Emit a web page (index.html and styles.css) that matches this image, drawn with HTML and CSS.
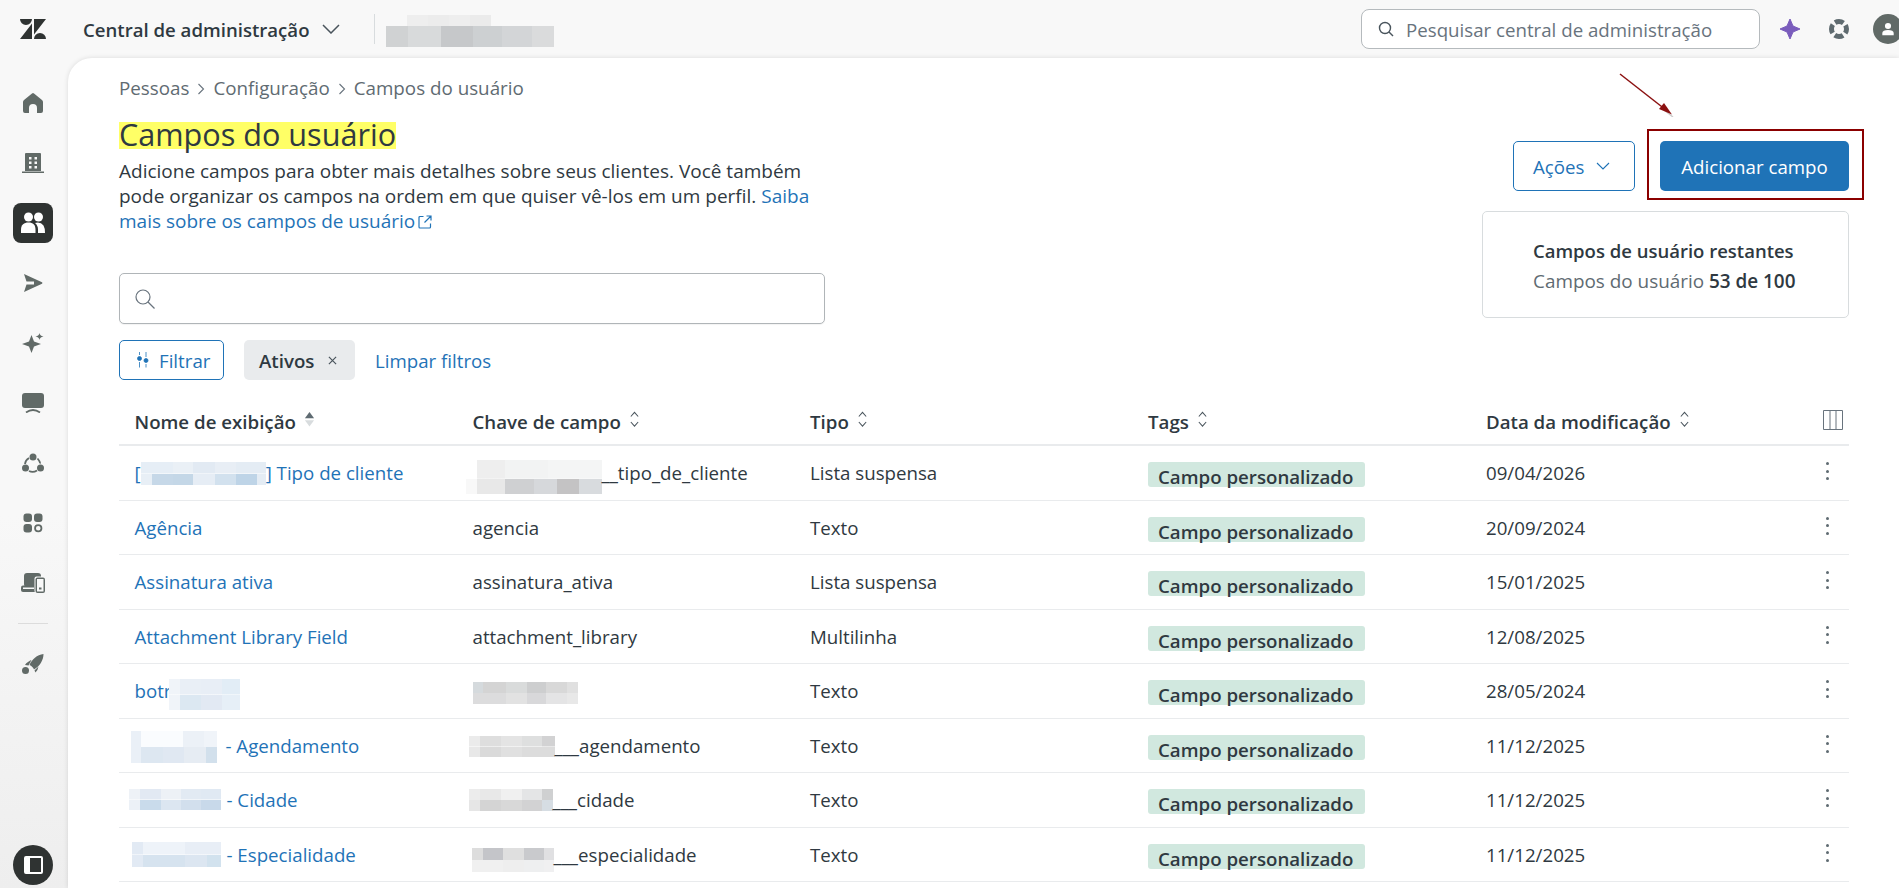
FILE: index.html
```html
<!DOCTYPE html>
<html lang="pt-BR">
<head>
    <meta charset="UTF-8">
    <meta name="viewport" content="width=device-width, initial-scale=1.0">
    <title>Campos do usuário</title>
    <link rel="stylesheet" href="styles.css">
</head>
<body>

    <header class="topbar">
        <svg class="logo" viewBox="0 0 26 20"><path d="M12 4.5V20H0ZM14 0H26L14 15.5ZM0 0H12A6 6 0 0 1 0 0ZM14 20A6 6 0 0 1 26 20Z"/></svg>
        <span class="product">Central de administração</span>
        <svg class="product-chevron" viewBox="0 0 18 10"><path d="M1 1l8 8 8-8"/></svg>
        <span class="topbar-sep"></span>
        <span class="blur blur-account"></span>
        <div class="global-search">
            <svg class="search-icon-small" viewBox="0 0 16 16"><circle cx="7" cy="7" r="5.5"/><path d="M11 11l4 4"/></svg>
            <span>Pesquisar central de administração</span>
        </div>
        <svg class="top-icon ai-star" viewBox="0 0 22 22"><path d="M11 1 14 8 21 11 14 14 11 21 8 14 1 11 8 8Z"/></svg>
        <svg class="top-icon support" viewBox="0 0 20 20"><circle cx="10" cy="10" r="7.500"/></svg>
        <div class="avatar">
            <svg viewBox="0 0 16 16"><circle cx="8" cy="4.500" r="3.500"/><path d="M1.500 15V12.500C1.500 10 4 9 8 9S14.500 10 14.500 12.500V15Z"/></svg>
        </div>
    </header>

    <div class="shell">
        <nav class="sidebar">
            <a class="nav-item"><svg viewBox="0 0 20 20"><path d="M9 .5a1.600 1.600 0 0 1 2 0l8 6.500q1 .8 1 2V18a2 2 0 0 1-2 2h-4v-5a4 4 0 0 0-8 0v5H2a2 2 0 0 1-2-2V9q0-1.200 1-2Z"/></svg></a>
            <a class="nav-item"><svg viewBox="0 0 22 20"><path fill-rule="evenodd" d="M4 0H18a1 1 0 0 1 1 1V18H3V1a1 1 0 0 1 1-1ZM7 4V6.500H9.500V4ZM12.500 4V6.500H15V4ZM7 8.500V11H9.500V8.500ZM12.500 8.500V11H15V8.500ZM7 13V15.500H9.500V13ZM12.500 13V15.500H15V13Z"/><path d="M0 18.500H22V20H0Z"/></svg></a>
            <a class="nav-item active"><svg viewBox="0 0 24 22"><circle cx="7.500" cy="5" r="4.500"/><circle cx="17.500" cy="5" r="4.500"/><path d="M0 21V17.500C0 13 3 10.500 7.500 10.500S14.500 13 14.500 17.500V21Z"/><path d="M14 11Q19.500 9.500 22.500 13.500Q24 16 24 21H17V17.500Q17 13.500 14 11Z"/></svg></a>
            <a class="nav-item"><svg viewBox="0 0 20 20"><path d="M1 1 19 9.200Q20 10 19 10.800L1 19 3.500 11.500H11V8.500H3.500Z"/></svg></a>
            <a class="nav-item"><svg viewBox="0 0 22 20"><path d="M9.500 2 12 8.500 19 11 12 13.500 9.500 20 7 13.500 0 11 7 8.500Z"/><path d="M17.500 0C17.800 2 18.800 3 21.500 3.500C18.800 4 17.800 5 17.500 7C17.200 5 16.200 4 13.500 3.500C16.200 3 17.200 2 17.500 0Z"/></svg></a>
            <a class="nav-item"><svg viewBox="0 0 22 20"><rect x="0" y="0" width="22" height="15" rx="3"/><path d="M4 19.500Q11 14.500 18 19.500" class="nav-stroke"/></svg></a>
            <a class="nav-item"><svg viewBox="0 0 22 20"><circle cx="11" cy="4" r="3.500"/><circle cx="3.500" cy="15" r="3.500"/><circle cx="18.500" cy="15" r="3.500"/><path class="nav-stroke" d="M7 5Q3.500 7 3 11M18 10.500Q18.500 9 15.500 5.500M7 18Q11 20 15 17.500"/></svg></a>
            <a class="nav-item"><svg viewBox="0 0 20 20"><rect x="0.500" y="0.500" width="8.500" height="8.500" rx="3"/><rect x="11" y="0.500" width="8.500" height="8.500" rx="3"/><rect x="0.500" y="11" width="8.500" height="8.500" rx="3"/><circle class="nav-stroke" cx="15.250" cy="15.250" r="3.200"/></svg></a>
            <a class="nav-item"><svg class="nav-devices" viewBox="0 0 24 20"><rect x="3" y="0" width="17" height="14" rx="3"/><rect x="0" y="12.500" width="16" height="6.500" rx="2"/><rect class="nav-gap" x="2" y="14.500" width="11" height="1.500"/><rect class="nav-gap" x="13.500" y="3.500" width="10.500" height="16.500" rx="2"/><rect x="14.500" y="4.500" width="9.500" height="15.500" rx="2"/><rect class="nav-gap" x="16" y="6" width="6.500" height="12.500"/><rect x="18" y="14.500" width="2.500" height="2"/></svg></a>
            <span class="nav-sep"></span>
            <a class="nav-item"><svg viewBox="0 0 22 20"><path d="M21.500 0C21.500 6 18 12 12 15.500C11.500 14 9.500 11.500 7.500 11C10 5 15 1 21.500 0Z"/><path d="M6 8Q9 5.800 9.500 6L6.500 11.500 3 11Q4 9 6 8ZM12.500 16.500 16.500 12.500Q16 16 13.500 18.500Z"/><circle cx="3.500" cy="16.500" r="3.500"/></svg></a>
            <button class="collapse-btn"><span class="collapse-icon"></span></button>
        </nav>

        <main class="panel">
            <div class="page-head">
                <div class="page-intro">
                    <div class="breadcrumb">
                        <span>Pessoas</span>
                        <svg viewBox="0 0 8 12"><path d="M1.500 1l5 5-5 5"/></svg>
                        <span>Configuração</span>
                        <svg viewBox="0 0 8 12"><path d="M1.500 1l5 5-5 5"/></svg>
                        <span>Campos do usuário</span>
                    </div>
                    <h1><span class="marked">Campos do usuário</span></h1>
                    <p class="lead">Adicione campos para obter mais detalhes sobre seus clientes. Você também pode organizar os campos na ordem em que quiser vê-los em um perfil. <a href="#">Saiba mais sobre os campos de usuário<svg class="ext-icon" viewBox="0 0 14 14"><path d="M5.500 1.500H2a1 1 0 0 0-1 1V12a1 1 0 0 0 1 1h9.500a1 1 0 0 0 1-1V8.500M8.500 1H13V5.500M13 1 6.500 7.500"/></svg></a></p>
                    <div class="search-box">
                        <svg viewBox="0 0 20 20"><circle cx="8" cy="8" r="7"/><path d="M13 13l6.500 6.500"/></svg>
                    </div>
                </div>
                <div class="page-side">
                    <div class="page-actions">
                        <button class="btn-outline">Ações <svg viewBox="0 0 14 8"><path d="M1 1l6 6 6-6"/></svg></button>
                        <div class="annotated">
                            <button class="btn-primary">Adicionar campo</button>
                            <svg class="note-arrow" viewBox="0 0 56 44"><path class="note-shadow" d="M44 36l10 8"/><path class="note-line" d="M1 1 47 37"/><path class="note-head" d="M53 41.500 40 36 45 30Z"/></svg>
                        </div>
                    </div>
                    <div class="quota-card">
                        <div class="quota-title">Campos de usuário restantes</div>
                        <div class="quota-text">Campos do usuário <b>53 de 100</b></div>
                    </div>
                </div>
            </div>

            <div class="filter-row">
                <button class="btn-filter">
                    <svg viewBox="0 0 12 16"><path d="M2.500 0V3M2.500 10V15.500M9 0V5M9 12V15.500"/><circle cx="2.500" cy="6.500" r="2"/><circle cx="9" cy="8.500" r="2"/></svg>
                    Filtrar
                </button>
                <span class="chip">Ativos <svg viewBox="0 0 10 10"><path d="M1 1l8 8M9 1l-8 8"/></svg></span>
                <a class="clear-link" href="#">Limpar filtros</a>
            </div>

            <div class="grid">
                <div class="row row-head">
                    <div class="cell">Nome de exibição <svg class="sort" viewBox="0 0 12 18"><path d="M6 1l5 7H1Z"/><path class="sort-off" d="M6 17l5-7H1Z"/></svg></div>
                    <div class="cell">Chave de campo <svg class="sort" viewBox="0 0 12 18"><path class="sort-line" d="M2 6l4-4.500L10 6M2 12l4 4.500L10 12"/></svg></div>
                    <div class="cell">Tipo <svg class="sort" viewBox="0 0 12 18"><path class="sort-line" d="M2 6l4-4.500L10 6M2 12l4 4.500L10 12"/></svg></div>
                    <div class="cell">Tags <svg class="sort" viewBox="0 0 12 18"><path class="sort-line" d="M2 6l4-4.500L10 6M2 12l4 4.500L10 12"/></svg></div>
                    <div class="cell">Data da modificação <svg class="sort" viewBox="0 0 12 18"><path class="sort-line" d="M2 6l4-4.500L10 6M2 12l4 4.500L10 12"/></svg></div>
                    <div class="cell cell-action"><svg class="columns-icon" viewBox="0 0 20 20"><path d="M.5.5H19.500V19.500H.5ZM7 .5V19.500M13 .5V19.500"/></svg></div>
                </div>

                <div class="row">
                    <div class="cell"><a href="#">[</a><span class="blur blur-n1"></span><a href="#">] Tipo de cliente</a></div>
                    <div class="cell"><span class="blur blur-k1"></span>__tipo_de_cliente</div>
                    <div class="cell">Lista suspensa</div>
                    <div class="cell"><span class="tag">Campo personalizado</span></div>
                    <div class="cell">09/04/2026</div>
                    <div class="cell cell-action"><span class="kebab"><i></i><i></i><i></i></span></div>
                </div>
                <div class="row">
                    <div class="cell"><a href="#">Agência</a></div>
                    <div class="cell">agencia</div>
                    <div class="cell">Texto</div>
                    <div class="cell"><span class="tag">Campo personalizado</span></div>
                    <div class="cell">20/09/2024</div>
                    <div class="cell cell-action"><span class="kebab"><i></i><i></i><i></i></span></div>
                </div>
                <div class="row">
                    <div class="cell"><a href="#">Assinatura ativa</a></div>
                    <div class="cell">assinatura_ativa</div>
                    <div class="cell">Lista suspensa</div>
                    <div class="cell"><span class="tag">Campo personalizado</span></div>
                    <div class="cell">15/01/2025</div>
                    <div class="cell cell-action"><span class="kebab"><i></i><i></i><i></i></span></div>
                </div>
                <div class="row">
                    <div class="cell"><a href="#">Attachment Library Field</a></div>
                    <div class="cell">attachment_library</div>
                    <div class="cell">Multilinha</div>
                    <div class="cell"><span class="tag">Campo personalizado</span></div>
                    <div class="cell">12/08/2025</div>
                    <div class="cell cell-action"><span class="kebab"><i></i><i></i><i></i></span></div>
                </div>
                <div class="row">
                    <div class="cell"><a href="#">botr</a><span class="blur blur-n5"></span></div>
                    <div class="cell"><span class="blur blur-k5"></span></div>
                    <div class="cell">Texto</div>
                    <div class="cell"><span class="tag">Campo personalizado</span></div>
                    <div class="cell">28/05/2024</div>
                    <div class="cell cell-action"><span class="kebab"><i></i><i></i><i></i></span></div>
                </div>
                <div class="row">
                    <div class="cell"><span class="blur blur-n6"></span><a class="after-blur" href="#">- Agendamento</a></div>
                    <div class="cell"><span class="blur blur-k6"></span>___agendamento</div>
                    <div class="cell">Texto</div>
                    <div class="cell"><span class="tag">Campo personalizado</span></div>
                    <div class="cell">11/12/2025</div>
                    <div class="cell cell-action"><span class="kebab"><i></i><i></i><i></i></span></div>
                </div>
                <div class="row">
                    <div class="cell"><span class="blur blur-n7"></span><a class="after-blur" href="#">- Cidade</a></div>
                    <div class="cell"><span class="blur blur-k7"></span>___cidade</div>
                    <div class="cell">Texto</div>
                    <div class="cell"><span class="tag">Campo personalizado</span></div>
                    <div class="cell">11/12/2025</div>
                    <div class="cell cell-action"><span class="kebab"><i></i><i></i><i></i></span></div>
                </div>
                <div class="row">
                    <div class="cell"><span class="blur blur-n8"></span><a class="after-blur" href="#">- Especialidade</a></div>
                    <div class="cell"><span class="blur blur-k8"></span>___especialidade</div>
                    <div class="cell">Texto</div>
                    <div class="cell"><span class="tag">Campo personalizado</span></div>
                    <div class="cell">11/12/2025</div>
                    <div class="cell cell-action"><span class="kebab"><i></i><i></i><i></i></span></div>
                </div>
            </div>
        </main>
    </div>

</body>
</html>
```

FILE: styles.css
```css
* {
    box-sizing: border-box;
}

body {
    font-family: "Open Sans", "Noto Sans", sans-serif;
    font-size: 18.7px;
    line-height: 25px;
    color: #2f3941;
    background: #f8f8f8;
    margin: 0;
    height: 100vh;
    overflow: hidden;
    display: flex;
    flex-direction: column;
}

a {
    color: #1f73b7;
    text-decoration: none;
}

button {
    font: inherit;
    cursor: pointer;
}

/* top bar */
.topbar {
    height: 58px;
    flex: none;
    display: flex;
    align-items: center;
    padding-left: 20px;
}

.logo {
    width: 26px;
    height: 20px;
    fill: #2f3332;
}

.product {
    margin-left: 37px;
    font-size: 18.6px;
    font-weight: 600;
}

.product-chevron {
    width: 18px;
    height: 10px;
    margin-left: 13px;
    fill: none;
    stroke: #49545c;
    stroke-width: 1.5;
}

.topbar-sep {
    width: 1px;
    height: 30px;
    background: #d8dcde;
    margin-left: 34px;
}

.global-search {
    width: 399px;
    height: 40px;
    margin-left: auto;
    display: flex;
    align-items: center;
    background: #fff;
    border: 1px solid #b5babd;
    border-radius: 8px;
    padding-left: 16px;
    color: #68737d;
}

.search-icon-small {
    width: 16px;
    height: 16px;
    margin-right: 12px;
    fill: none;
    stroke: #49545c;
    stroke-width: 1.4;
}

.top-icon {
    flex: none;
}

.ai-star {
    width: 22px;
    height: 22px;
    margin-left: 19px;
    fill: #7a5cbc;
    stroke: #7a5cbc;
    stroke-width: 1;
    stroke-linejoin: round;
}

.support {
    width: 20px;
    height: 20px;
    margin-left: 28px;
    fill: none;
    stroke: #5f6b70;
    stroke-width: 5;
    stroke-dasharray: 8.8 3;
    stroke-dashoffset: 4.4;
}

.avatar {
    width: 30px;
    height: 30px;
    flex: none;
    margin-left: 24px;
    margin-right: -4px;
    border-radius: 50%;
    background: #616a67;
    display: flex;
    align-items: center;
    justify-content: center;
}

.avatar svg {
    width: 14px;
    height: 14px;
    fill: #fff;
}

/* mosaics over the hidden names */
.blur {
    display: block;
    flex: none;
    background-repeat: no-repeat;
    background-size: 100% 50%;
    background-position: 0 0, 0 100%;
}

.blur-account {
    width: 168px;
    height: 32px;
    margin-left: 11px;
    margin-top: 4px;
    background-image:
        linear-gradient(90deg, #eee 0 25%, #ececec 25% 50%, #eee 50% 75%, #ebebeb 75%),
        linear-gradient(90deg, #d0d2d3 0 13%, #d8dadb 13% 33%, #c6c8ca 33% 52%, #cdd0d2 52% 69%, #d3d5d7 69% 87%, #dadbdc 87%);
    background-size: 84px 11px, 100% 21px;
    background-position: 21px 0, 0 100%;
}

.blur-n1 {
    width: 125px;
    height: 23px;
    margin-top: 2px;
    background-image:
        linear-gradient(90deg, #e6eef6 0 26%, #eaf0f6 26% 42%, #e2eaf3 42% 59%, #e8eef5 59% 76%, #e4ecf4 76%),
        linear-gradient(90deg, #e8eff6 0 9%, #c6d8e8 9% 26%, #c4d7e7 26% 42%, #e6edf5 42% 59%, #d2e1ee 59% 76%, #bed4e7 76% 93%, #e4ecf4 93%);
}

.blur-k1 {
    width: 136px;
    height: 34px;
    margin-left: -7px;
    margin-top: 9px;
    background-image:
        linear-gradient(90deg, #fff 0 8%, #eeeeee 8% 29%, #f2f3f3 29% 60%, #f4f5f5 60%),
        linear-gradient(90deg, #f8f8f8 0 8%, #e8e8e8 8% 29%, #cfd0d2 29% 50%, #d6d8db 50% 67%, #c4c3c4 67% 83%, #d8dbde 83%);
    background-size: 100% 55%, 100% 45%;
}

.blur-n5 {
    width: 71px;
    height: 31px;
    margin-left: -2px;
    margin-top: 8px;
    background-image:
        linear-gradient(90deg, #f0f4f9 0 16%, #e9eff6 16% 45%, #e8eef6 45% 74%, #e2edf6 74%),
        linear-gradient(90deg, #f0f4f9 0 16%, #dce8f2 16% 45%, #e2e9f3 45% 74%, #e6eff7 74%);
}

.blur-k5 {
    width: 105px;
    height: 22px;
    margin-top: 5px;
    background-image:
        linear-gradient(90deg, #d5dadd 0 10%, #d4d4d4 10% 31%, #d9dbdb 31% 51%, #cdcecf 51% 70%, #d8d8d8 70% 90%, #e0e0e0 90%),
        linear-gradient(90deg, #dcdcdd 0 31%, #e2e2e2 31% 51%, #d8d8da 51% 70%, #e4e4e5 70% 90%, #e8e8e8 90%);
}

.blur-n6 {
    width: 86px;
    height: 32px;
    margin-left: -4px;
    margin-top: 4px;
    background-image:
        linear-gradient(90deg, #eaf0f7 0 12%, #fafcfe 12% 60%, #ecf1f7 60% 85%, #f0f4f9 85%),
        linear-gradient(90deg, #eaf0f7 0 12%, #dde7f1 12% 37%, #e0e8f2 37% 62%, #e6ecf3 62% 87%, #d2e0ec 87%);
}

.blur-k6 {
    width: 86px;
    height: 21px;
    margin-left: -4px;
    margin-top: 3px;
    background-image:
        linear-gradient(90deg, #ebebeb 0 13%, #dedede 13% 37%, #e4e4e4 37% 62%, #dedfdf 62% 85%, #d2d2d3 85%),
        linear-gradient(90deg, #e8e8e8 0 13%, #dadada 13% 37%, #e0e0e0 37% 62%, #dcdcdc 62%);
}

.blur-n7 {
    width: 92px;
    height: 21px;
    margin-left: -6px;
    margin-right: -3px;
    background-image:
        linear-gradient(90deg, #eef2f7 0 12%, #e2e9f3 12% 35%, #edf1f6 35% 57%, #e2eaf3 57% 78%, #e0e9f3 78%),
        linear-gradient(90deg, #ecf1f7 0 12%, #c9dbeb 12% 35%, #dce6f1 35% 57%, #d2dfed 57% 78%, #c8d9ea 78%);
}

.blur-k7 {
    width: 84px;
    height: 22px;
    margin-left: -4px;
    margin-top: 1px;
    background-image:
        linear-gradient(90deg, #ececec 0 13%, #e8e8e8 13% 38%, #f0f0f0 38% 63%, #e4e5e6 63% 87%, #cfd0d1 87%),
        linear-gradient(90deg, #e6e6e6 0 13%, #d4d4d4 13% 38%, #d8d8d8 38% 63%, #d2d2d3 63% 87%, #d6dde3 87%);
}

.blur-n8 {
    width: 89px;
    height: 25px;
    margin-left: -3px;
    margin-right: -3px;
    margin-top: 1px;
    background-image:
        linear-gradient(90deg, #e2eaf4 0 12%, #eef3f9 12% 60%, #e8eef6 60%),
        linear-gradient(90deg, #e2eaf4 0 12%, #d6e3ef 12% 60%, #dce6f1 60% 84%, #d2e2ee 84%);
}

.blur-k8 {
    width: 82px;
    height: 24px;
    margin-left: -1px;
    margin-top: 12px;
    background-image:
        linear-gradient(90deg, #dddddd 0 13%, #c4c5c9 13% 38%, #dfdfdf 38% 63%, #c9cacd 63% 88%, #e0e0e2 88%),
        linear-gradient(90deg, #f0f0f0 0 38%, #eeeeee 38% 63%, #eeeff0 63% 88%, #f0f0f1 88%);
}

/* left rail */
.shell {
    flex: 1;
    min-height: 0;
    display: flex;
}

.sidebar {
    width: 68px;
    flex: none;
    display: flex;
    flex-direction: column;
    align-items: flex-start;
    padding: 25px 0 3px 13px;
    background: linear-gradient(#f8f8f8 55%, #eeeeee);
}

.nav-item {
    width: 40px;
    height: 40px;
    flex: none;
    margin-bottom: 20px;
    border-radius: 8px;
    display: flex;
    align-items: center;
    justify-content: center;
}

.nav-item svg {
    width: 22px;
    height: 20px;
    fill: #616a67;
}

.nav-item .nav-stroke {
    fill: none;
    stroke: #616a67;
    stroke-width: 1.8;
}

.nav-item .nav-devices {
    width: 24px;
}

.nav-item .nav-gap {
    fill: #f8f8f8;
}

.nav-item.active {
    background: #2f3332;
}

.nav-item.active svg {
    width: 24px;
    height: 22px;
    fill: #fff;
}

.nav-sep {
    width: 30px;
    height: 1px;
    flex: none;
    margin: 0 0 20px 5px;
    background: #dcdcdc;
}

.collapse-btn {
    width: 40px;
    height: 40px;
    flex: none;
    margin-top: auto;
    padding: 0;
    border: none;
    border-radius: 50%;
    background: #2f3332;
    display: flex;
    align-items: center;
    justify-content: center;
}

.collapse-icon {
    width: 19px;
    height: 18px;
    border: 2px solid #fff;
    border-left-width: 6px;
    border-radius: 2px;
    background: #2f3332;
}

/* main panel */
.panel {
    flex: 1;
    min-width: 0;
    background: #fff;
    border-top-left-radius: 24px;
    box-shadow: 0 0 5px rgba(0, 0, 0, 0.12);
    padding: 18px 50px 0 51px;
    overflow: hidden;
}

.page-head {
    display: flex;
    justify-content: space-between;
}

.page-intro {
    width: 706px;
}

.breadcrumb {
    display: flex;
    align-items: center;
    font-size: 18.8px;
    color: #5f6b72;
}

.breadcrumb svg {
    width: 8px;
    height: 12px;
    margin: 0 8px;
    fill: none;
    stroke: #68737d;
    stroke-width: 1.1;
}

h1 {
    margin: 21px 0 0;
    font-size: 30.6px;
    font-weight: 400;
    line-height: 25px;
}

.marked {
    display: inline-block;
    height: 27px;
    background: #ffff66;
}

.lead {
    margin: 10px 0 0;
    font-size: 19px;
}

.ext-icon {
    width: 14px;
    height: 14px;
    margin-left: 3px;
    vertical-align: -1px;
    fill: none;
    stroke: #1f73b7;
    stroke-width: 1.2;
}

.search-box {
    height: 51px;
    margin-top: 39px;
    background: #fff;
    border: 1px solid #b0b5b8;
    border-radius: 5px;
    box-shadow: 0 1px 1px rgba(0, 0, 0, 0.05);
    display: flex;
    align-items: center;
    padding-left: 15px;
}

.search-box svg {
    width: 20px;
    height: 20px;
    fill: none;
    stroke: #68737d;
    stroke-width: 1.2;
}

.page-side {
    width: 367px;
    padding-top: 65px;
}

.page-actions {
    display: flex;
    justify-content: flex-end;
    gap: 25px;
}

.btn-outline,
.btn-primary {
    height: 50px;
    border-radius: 5px;
}

.btn-outline {
    width: 122px;
    display: flex;
    align-items: center;
    padding: 0 0 0 19px;
    background: #fff;
    border: 1px solid #1f73b7;
    color: #1f73b7;
}

.btn-outline svg {
    width: 14px;
    height: 8px;
    margin-left: 12px;
    fill: none;
    stroke: #1f73b7;
    stroke-width: 1.1;
}

.btn-primary {
    display: block;
    width: 189px;
    padding: 0;
    background: #1f73b7;
    border: none;
    color: #fff;
}

/* red annotation drawn on the screenshot */
.annotated {
    position: relative;
}

.annotated::after {
    content: "";
    position: absolute;
    top: -12px;
    right: -15px;
    bottom: -9px;
    left: -13px;
    border: 2px solid #8b0000;
}

.note-arrow {
    position: absolute;
    left: -41px;
    top: -68px;
    width: 56px;
    height: 44px;
}

.note-line {
    fill: none;
    stroke: #8b1010;
    stroke-width: 1.5;
}

.note-head {
    fill: #8b1010;
}

.note-shadow {
    fill: none;
    stroke: #cccccc;
    stroke-width: 1.5;
}

.quota-card {
    height: 107px;
    margin-top: 20px;
    padding: 26px 0 0 50px;
    border: 1px solid #d8dcde;
    border-radius: 5px;
    font-size: 18.9px;
    white-space: nowrap;
}

.quota-title {
    font-size: 18.5px;
    font-weight: 600;
}

.quota-text {
    margin-top: 6px;
    color: #5f6b72;
}

.quota-text b {
    font-weight: 600;
    color: #2f3941;
}

/* filters */
.filter-row {
    display: flex;
    align-items: center;
    margin-top: 16px;
}

.btn-filter {
    width: 105px;
    height: 40px;
    display: flex;
    align-items: center;
    padding: 0 0 0 17px;
    background: #fff;
    border: 1px solid #1f73b7;
    border-radius: 5px;
    color: #1f73b7;
}

.btn-filter svg {
    width: 12px;
    height: 16px;
    margin-right: 10px;
    fill: #1f73b7;
    stroke: #1f73b7;
    stroke-width: 0.8;
}

.chip {
    width: 111px;
    height: 40px;
    margin-left: 20px;
    display: flex;
    align-items: center;
    padding-left: 15px;
    background: #e9ebed;
    border-radius: 5px;
    font-weight: 600;
}

.chip svg {
    width: 9px;
    height: 9px;
    margin-left: 14px;
    fill: none;
    stroke: #49545c;
    stroke-width: 1.3;
}

.clear-link {
    margin-left: 20px;
}

/* table */
.grid {
    display: flex;
    flex-direction: column;
}

.row {
    height: 54.5px;
    flex: none;
    display: grid;
    grid-template-columns: 338px 337.5px 338px 338px 1fr 44px;
    border-bottom: 1px solid #e9ebed;
}

.row-head {
    height: 66px;
    font-weight: 600;
    border-bottom-width: 2px;
}

.row-head .cell {
    align-items: flex-start;
    padding-top: 29px;
}

.cell {
    display: flex;
    align-items: center;
    padding-left: 15.5px;
    min-width: 0;
    white-space: nowrap;
}

.after-blur {
    margin-left: 9px;
}

.sort {
    width: 11px;
    height: 16.5px;
    margin: 2px 0 0 8px;
    fill: #5f6b72;
}

.sort-off {
    fill: #d8dcde;
}

.sort-line {
    fill: none;
    stroke: #49545c;
    stroke-width: 1.1;
}

.row-head .cell-action {
    padding: 30px 0 0 18px;
}

.cell-action {
    padding-left: 0;
}

.columns-icon {
    width: 20px;
    height: 20px;
    fill: none;
    stroke: #68737d;
    stroke-width: 1;
}

.tag {
    width: 217px;
    height: 25px;
    margin-top: 4px;
    padding: 2px 0 0 10px;
    background: #d1e8df;
    border-radius: 3px;
    font-weight: 600;
    line-height: 25px;
}

.kebab {
    display: flex;
    flex-direction: column;
    gap: 4.5px;
    margin: -3px 0 0 21px;
}

.kebab i {
    width: 3px;
    height: 3px;
    border-radius: 50%;
    background: #5f6b72;
}
```
